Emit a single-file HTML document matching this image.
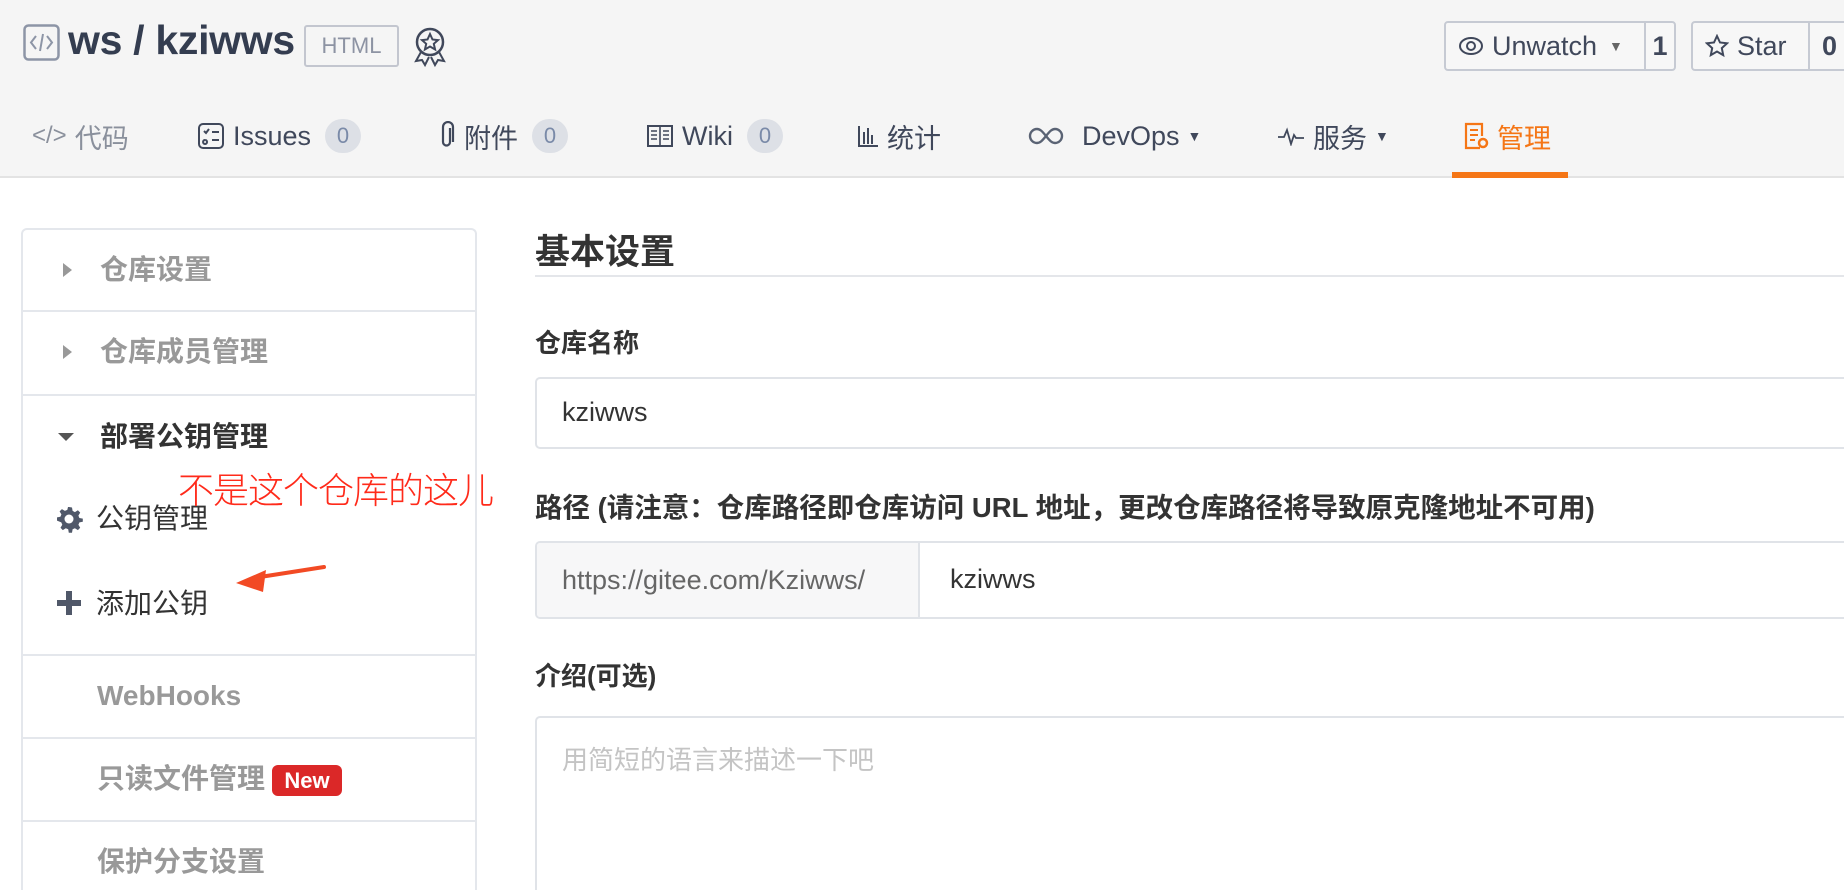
<!DOCTYPE html>
<html style="overflow:hidden;width:1844px;height:890px"><head><meta charset="utf-8">
<style>
*{box-sizing:border-box;margin:0;padding:0}
body{width:1844px;height:890px;overflow:hidden;background:#fff;font-family:"Liberation Sans","Noto Sans CJK SC",sans-serif;color:#40485b;position:relative}
.abs{position:absolute}
#hdr{position:absolute;left:0;top:0;width:1844px;height:178px;background:#f5f5f5;border-bottom:2px solid #e3e3e3}
.nav{position:absolute;top:116px;height:40px;font-size:27px;color:#40485b;display:flex;align-items:center;gap:8px;white-space:nowrap}
.cnt{display:inline-block;background:#dde0e6;color:#7a8aa8;border-radius:18px;font-size:22px;width:36px;height:34px;line-height:34px;text-align:center;margin-left:6px}
.btn{position:absolute;top:21px;height:50px;border:2px solid #c6cad3;border-radius:4px;background:#f7f7f7;display:flex;align-items:center;font-size:27px;color:#40485b}
.side{position:absolute;left:21px;top:228px;width:456px;height:662px;border:2px solid #e4e7ec;border-bottom:none;border-radius:6px 6px 0 0}
.sep{position:absolute;left:21px;width:456px;height:2px;background:#e4e7ec}
.si{position:absolute;font-size:28px;color:#999;font-weight:bold;white-space:nowrap;line-height:32px}
.lbl{position:absolute;left:535px;font-size:26px;font-weight:bold;color:#333;white-space:nowrap}
.inp{position:absolute;left:535px;width:1320px;border:2px solid #e0e3e8;border-radius:5px;background:#fff}
</style></head><body>
<div id="hdr">
  <svg class="abs" style="left:23px;top:24px" width="37" height="37" viewBox="0 0 37 37"><rect x="1.5" y="1.5" width="34" height="34" rx="4" fill="none" stroke="#8d95a6" stroke-width="2.5"/><path d="M13 12l-5 6.5 5 6.5M24 12l5 6.5-5 6.5M20 10l-3 17" fill="none" stroke="#8d95a6" stroke-width="2"/></svg>
  <div class="abs" style="left:68px;top:17px;font-size:41px;font-weight:bold;color:#343d50;letter-spacing:-0.3px">ws / kziwws</div>
  <div class="abs" style="left:304px;top:25px;width:95px;height:42px;border:2px solid #c3c6cf;border-radius:3px;font-size:22px;color:#8d93a3;text-align:center;line-height:38px">HTML</div>
  <svg class="abs" style="left:412px;top:26px" width="36" height="42" viewBox="0 0 36 42"><circle cx="18" cy="16" r="13" fill="none" stroke="#40485b" stroke-width="2.5"/><path d="M18 8l2.5 5.5 5.5.6-4.2 3.7 1.3 5.7-5.1-3-5.1 3 1.3-5.7-4.2-3.7 5.5-.6z" fill="none" stroke="#40485b" stroke-width="2"/><path d="M9 26l-5 9 6-1 3 5 4-8M27 26l5 9-6-1-3 5-4-8" fill="none" stroke="#40485b" stroke-width="2"/></svg>

  <div class="btn" style="left:1444px;width:232px"><span style="width:198px;display:flex;align-items:center;padding-left:12px;gap:8px"><svg width="26" height="20" viewBox="0 0 26 20"><ellipse cx="13" cy="10" rx="11" ry="8" fill="none" stroke="#40485b" stroke-width="2"/><circle cx="13" cy="10" r="4" fill="none" stroke="#40485b" stroke-width="2"/></svg>Unwatch<span style="font-size:14px;color:#666;margin-left:4px">▼</span></span><span style="border-left:2px solid #c6cad3;height:100%;flex:1;text-align:center;line-height:46px;font-weight:bold">1</span></div>
  <div class="btn" style="left:1691px;width:170px"><span style="width:115px;display:flex;align-items:center;padding-left:12px;gap:8px"><svg width="24" height="24" viewBox="0 0 24 24"><path d="M12 2l3 6.5 7 .8-5.2 4.8 1.4 7-6.2-3.6-6.2 3.6 1.4-7L2 9.3l7-.8z" fill="none" stroke="#40485b" stroke-width="2"/></svg>Star</span><span style="border-left:2px solid #c6cad3;height:100%;padding-left:12px;line-height:46px;font-weight:bold">0</span></div>

  <div class="nav" style="left:32px;color:#8a909c"><span style="font-size:24px">&lt;/&gt;</span>代码</div>
  <div class="nav" style="left:197px"><svg width="28" height="28" viewBox="0 0 28 28"><rect x="2" y="2" width="24" height="24" rx="4" fill="none" stroke="#40485b" stroke-width="2"/><path d="M7 9l2 2 3-4M15 10h7M8 18a2 2 0 1 0 .1 0M15 18h7" fill="none" stroke="#40485b" stroke-width="2"/></svg>Issues<span class="cnt">0</span></div>
  <div class="nav" style="left:438px"><svg width="18" height="30" viewBox="0 0 18 30"><path d="M12 7v14a3.5 3.5 0 0 1-7 0V6a5 5 0 0 1 10 0v15" fill="none" stroke="#40485b" stroke-width="2.2"/></svg>附件<span class="cnt">0</span></div>
  <div class="nav" style="left:646px"><svg width="28" height="24" viewBox="0 0 28 24"><rect x="2" y="2" width="24" height="20" fill="none" stroke="#40485b" stroke-width="2"/><path d="M14 2v20M5 7h6M5 11h6M5 15h6M17 7h6M17 11h6M17 15h6" stroke="#40485b" stroke-width="1.6"/></svg>Wiki<span class="cnt">0</span></div>
  <div class="nav" style="left:857px"><svg width="22" height="24" viewBox="0 0 22 24"><path d="M2 2v20h19M7 8v12M11 4v16M15 11v9" fill="none" stroke="#40485b" stroke-width="2"/></svg>统计</div>
  <div class="nav" style="left:1028px"><svg width="36" height="20" viewBox="0 0 36 20"><path d="M18 10c-4-5-6-7-9-7a7 7 0 0 0 0 14c3 0 5-2 9-7s6-7 9-7a7 7 0 0 1 0 14c-3 0-5-2-9-7z" fill="none" stroke="#5a6374" stroke-width="2.4"/></svg><span style="margin-left:10px">DevOps</span><span style="font-size:14px">▼</span></div>
  <div class="nav" style="left:1277px"><svg width="28" height="20" viewBox="0 0 28 20"><path d="M1 11h6l3-7 4 14 3-9 2 3h8" fill="none" stroke="#40485b" stroke-width="1.8"/></svg>服务<span style="font-size:14px">▼</span></div>
  <div class="nav" style="left:1463px;color:#f57616"><svg width="26" height="30" viewBox="0 0 26 30"><path d="M17 27H3V3h16v12" fill="none" stroke="#f57616" stroke-width="2.2"/><path d="M7 9h8M7 14h8M7 19h5" stroke="#f57616" stroke-width="2"/><circle cx="20" cy="22" r="4" fill="none" stroke="#f57616" stroke-width="2.5"/></svg>管理</div>
  <div class="abs" style="left:1452px;top:172px;width:116px;height:6px;background:#f57616"></div>
</div>

<div class="side"></div>
<div class="sep" style="top:310px"></div>
<div class="sep" style="top:394px"></div>
<div class="sep" style="top:654px"></div>
<div class="sep" style="top:737px"></div>
<div class="sep" style="top:820px"></div>
<svg class="abs" style="left:61px;top:262px" width="12" height="16"><path d="M2 1l9 7-9 7z" fill="#999"/></svg>
<div class="si" style="left:100px;top:254px">仓库设置</div>
<svg class="abs" style="left:61px;top:344px" width="12" height="16"><path d="M2 1l9 7-9 7z" fill="#999"/></svg>
<div class="si" style="left:100px;top:336px">仓库成员管理</div>
<svg class="abs" style="left:57px;top:431px" width="18" height="12"><path d="M1 2h16l-8 8z" fill="#555"/></svg>
<div class="si" style="left:100px;top:421px;color:#333">部署公钥管理</div>
<svg class="abs" style="left:55px;top:505px" width="28" height="28" viewBox="0 0 28 28"><path d="M14 2l3 .5.6 3.4 2.3 1.2 3-1.8 2.3 2.3-1.8 3 1 2.4 3.4.6v3.2l-3.4.6-1 2.4 1.8 3-2.3 2.3-3-1.8-2.3 1-.6 3.4h-3.2l-.6-3.4-2.4-1-3 1.8-2.3-2.3 1.8-3-1-2.4L2 15.6v-3.2l3.4-.6 1-2.4-1.8-3 2.3-2.3 3 1.8 2.4-1L13 2z" fill="#505869"/><circle cx="14" cy="14" r="4.5" fill="#fff"/></svg>
<div class="si" style="left:96px;top:503px;color:#333;font-weight:normal">公钥管理</div>
<svg class="abs" style="left:56px;top:590px" width="26" height="26"><path d="M10 1h6v9h9v6h-9v9h-6v-9H1v-6h9z" fill="#505869"/></svg>
<div class="si" style="left:96px;top:588px;color:#333;font-weight:normal">添加公钥</div>
<div class="si" style="left:97px;top:680px;font-size:28px">WebHooks</div>
<div class="si" style="left:97px;top:763px">只读文件管理</div>
<div class="abs" style="left:272px;top:765px;width:70px;height:31px;background:#db2828;border-radius:6px;color:#fff;font-weight:bold;font-size:22px;text-align:center;line-height:31px">New</div>
<div class="si" style="left:97px;top:846px">保护分支设置</div>

<div class="abs" style="left:178px;top:466px;font-size:36px;color:#ff2a1a;white-space:nowrap;font-family:'Noto Sans CJK SC',sans-serif;font-weight:300;line-height:44px;letter-spacing:-1px">不是这个仓库的这儿</div>
<svg class="abs" style="left:230px;top:560px" width="100" height="34"><path d="M94 7L30 17" stroke="#f24a24" stroke-width="4" stroke-linecap="round"/><path d="M6 23l30-13-3 22z" fill="#f24a24"/></svg>

<div class="abs" style="left:535px;top:224px;font-size:35px;font-weight:bold;color:#333">基本设置</div>
<div class="abs" style="left:535px;top:275px;width:1309px;height:2px;background:#e4e6ea"></div>
<div class="lbl" style="top:323px">仓库名称</div>
<div class="inp" style="top:377px;height:72px"><span class="abs" style="left:25px;top:18px;font-size:27px;color:#333">kziwws</span></div>
<div class="lbl" style="top:485px;font-size:27.5px">路径 (请注意：仓库路径即仓库访问 URL 地址，更改仓库路径将导致原克隆地址不可用)</div>
<div class="inp" style="top:541px;height:78px;overflow:hidden"><div class="abs" style="left:0;top:0;width:383px;height:100%;background:#f7f7f8;border-right:2px solid #e0e3e8;font-size:27px;color:#666;padding-left:25px;line-height:74px;white-space:nowrap">https://gitee.com/Kziwws/</div><span class="abs" style="left:413px;top:21px;font-size:27px;color:#333">kziwws</span></div>
<div class="lbl" style="top:656px">介绍(可选)</div>
<div class="inp" style="top:716px;height:174px;border-bottom:none;border-radius:5px 5px 0 0"><span class="abs" style="left:25px;top:22px;font-size:26px;color:#c4c4c4">用简短的语言来描述一下吧</span></div>
</body></html>
